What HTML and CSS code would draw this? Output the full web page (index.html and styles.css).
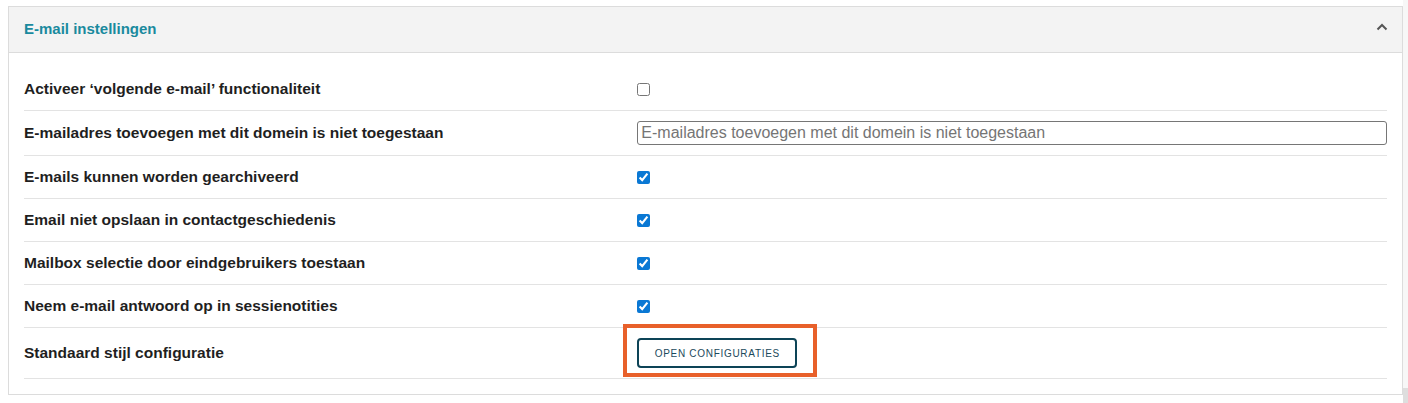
FILE: index.html
```html
<!DOCTYPE html>
<html lang="nl">
<head>
<meta charset="utf-8">
<title>E-mail instellingen</title>
<link rel="stylesheet" href="styles.css">
</head>
<body>
<div class="page">
  <main class="main">
    <section class="panel">
      <header class="panel-header">
        <h2 class="panel-title">E-mail instellingen</h2>
        <svg class="chevron" width="12" height="8" viewBox="0 0 12 8" aria-hidden="true">
          <polyline points="1.5,6.5 6,2 10.5,6.5" fill="none" stroke="#555" stroke-width="2"/>
        </svg>
      </header>
      <div class="panel-body">
        <div class="row">
          <div class="label">Activeer ‘volgende e-mail’ functionaliteit</div>
          <div class="value"><input type="checkbox" class="check"></div>
        </div>
        <div class="row row-input">
          <div class="label">E-mailadres toevoegen met dit domein is niet toegestaan</div>
          <div class="value"><input type="text" class="text-input" placeholder="E-mailadres toevoegen met dit domein is niet toegestaan"></div>
        </div>
        <div class="row">
          <div class="label">E-mails kunnen worden gearchiveerd</div>
          <div class="value"><input type="checkbox" class="check" checked></div>
        </div>
        <div class="row">
          <div class="label">Email niet opslaan in contactgeschiedenis</div>
          <div class="value"><input type="checkbox" class="check" checked></div>
        </div>
        <div class="row">
          <div class="label">Mailbox selectie door eindgebruikers toestaan</div>
          <div class="value"><input type="checkbox" class="check" checked></div>
        </div>
        <div class="row">
          <div class="label">Neem e-mail antwoord op in sessienotities</div>
          <div class="value"><input type="checkbox" class="check" checked></div>
        </div>
        <div class="row row-button">
          <div class="label">Standaard stijl configuratie</div>
          <div class="value">
            <span class="highlight"><button type="button" class="btn">OPEN CONFIGURATIES</button></span>
          </div>
        </div>
      </div>
    </section>
  </main>
  <aside class="scrollstrip"><div class="scroll-thumb"></div></aside>
</div>
</body>
</html>
```

FILE: styles.css
```css
html, body {
  margin: 0;
  padding: 0;
  background: #ffffff;
  font-family: "Liberation Sans", Arial, sans-serif;
  color: #222222;
}

.page {
  display: flex;
  width: 1408px;
  height: 403px;
  overflow: hidden;
}

.main {
  flex: 1;
  padding: 6px 0 0 8px;
}

.scrollstrip {
  width: 5px;
  background: #f7f7f7;
  display: flex;
  flex-direction: column;
  justify-content: flex-end;
}

.scroll-thumb {
  height: 15px;
  background: #dedede;
}

.panel {
  border: 1px solid #dcdcdc;
  background: #ffffff;
}

.panel-header {
  display: flex;
  align-items: center;
  justify-content: space-between;
  box-sizing: content-box;
  height: 43px;
  padding: 0 14px 2px 15px;
  background: #f3f3f3;
  border-bottom: 1px solid #dcdcdc;
}

.panel-title {
  margin: 0;
  font-size: 15px;
  font-weight: bold;
  color: #1a8a9e;
}

.chevron {
  display: block;
  margin-bottom: 4px;
}

.panel-body {
  padding: 15px 15px 15px 15px;
}

.row {
  display: grid;
  grid-template-columns: 45% 55%;
  align-items: center;
  min-height: 42px;
  border-bottom: 1px solid #e3e3e3;
}

.row-input {
  min-height: 44px;
}

.row-button {
  min-height: 50px;
}

.label {
  font-size: 15.5px;
  line-height: 18px;
  font-weight: bold;
  color: #1f1f1f;
}

.value {
  display: flex;
  align-items: center;
}

.check {
  width: 13px;
  height: 13px;
  margin: 0;
  accent-color: #0a78d4;
}

.text-input {
  width: 100%;
  height: 24px;
  box-sizing: border-box;
  border: 1px solid #767676;
  border-radius: 3px;
  padding: 1px 3px;
  font-family: "Liberation Sans", Arial, sans-serif;
  font-size: 16px;
  color: #222222;
}

.text-input::placeholder {
  color: #757575;
}

.highlight {
  position: relative;
  display: inline-flex;
}

.highlight::after {
  content: "";
  position: absolute;
  left: -14px;
  top: -14px;
  right: -20px;
  bottom: -9px;
  border: 4px solid #e8602a;
  pointer-events: none;
}

.btn {
  width: 160px;
  height: 30px;
  box-sizing: border-box;
  background: #ffffff;
  border: 2px solid #0d4457;
  border-radius: 4px;
  font-family: "Liberation Sans", Arial, sans-serif;
  font-size: 10px;
  letter-spacing: 0.7px;
  color: #1c4a5c;
  padding: 0;
  cursor: pointer;
}
```
